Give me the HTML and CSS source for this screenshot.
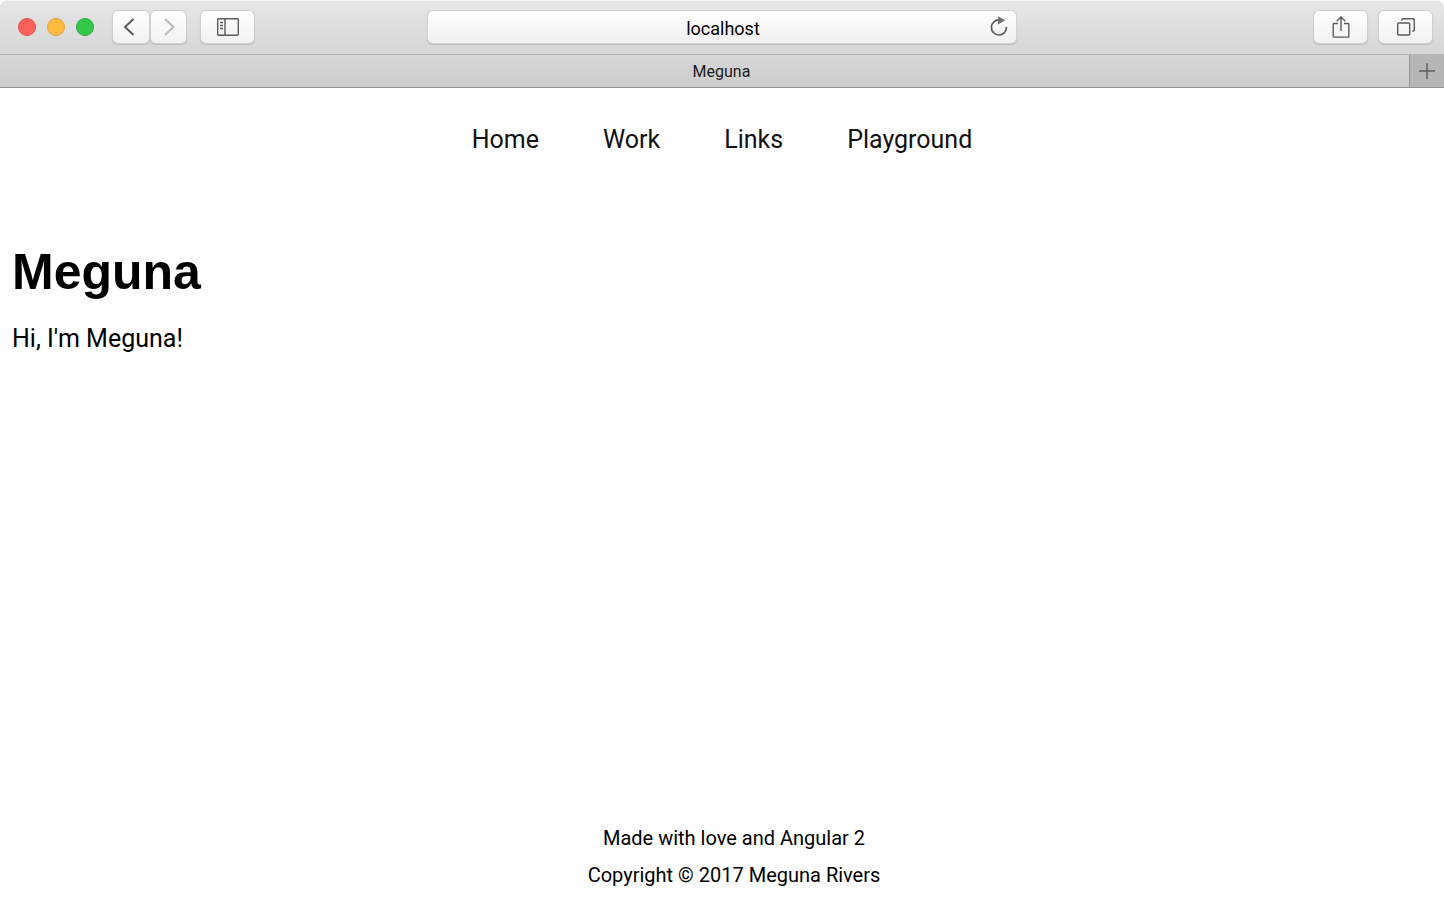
FILE: index.html
```html
<!DOCTYPE html>
<html lang="en">
<head>
<meta charset="utf-8">
<meta name="viewport" content="width=device-width, initial-scale=1">
<title>Meguna</title>
<link rel="stylesheet" href="styles.css">
</head>
<body>
<div class="window">
  <header class="chrome">
    <div class="toolbar">
      <div class="tools">
        <div class="lights">
          <button class="light close" aria-label="Close"></button>
          <button class="light minimize" aria-label="Minimize"></button>
          <button class="light expand" aria-label="Full screen"></button>
        </div>
        <div class="history">
          <button class="tool back" aria-label="Back"><svg width="14" height="20" viewBox="0 0 14 20"><path d="M11.5 2 3 10l8.500 8" stroke-width="2"/></svg></button>
          <button class="tool dim" aria-label="Forward"><svg width="14" height="20" viewBox="0 0 14 20"><path d="m3 2 8.500 8L3 18" stroke-width="2"/></svg></button>
        </div>
        <button class="tool wide" aria-label="Show sidebar"><svg width="24" height="20" viewBox="0 0 24 20"><rect x="1.700" y="1.700" width="20.600" height="16.600" rx="1"/><path d="M9 2v16M4 5.500h3M4 8.500h3M4 11.500h3"/></svg></button>
      </div>
      <div class="address">
        <input class="url" type="text" value="localhost" aria-label="Address">
        <button class="reload" aria-label="Reload"><svg width="20" height="22" viewBox="0 0 20 22"><path d="M10.500 4A7.500 7.500 0 1 0 17.400 11" stroke-width="1.700"/><path class="solid" d="m9 .2 7.200 4.100L9 8.400z"/></svg></button>
      </div>
      <div class="tools end">
        <button class="tool wide" aria-label="Share"><svg width="20" height="24" viewBox="0 0 20 24"><path d="M7 8.500H3c-.5 0-.8.3-.8.800v12c0 .5.3.8.8.8h14c.5 0 .8-.3.800-.8v-12c0-.5-.3-.8-.8-.8h-4M10 16V2M5.700 6.200 10 1.900l4.300 4.300"/></svg></button>
        <button class="tool wide" aria-label="Show all tabs"><svg width="20" height="20" viewBox="0 0 20 20"><rect x="1.700" y="6" width="12" height="12" rx="1"/><path d="M6 3.800V2.600c0-.6.3-.9.9-.9h10.500c.6 0 .9.3.9.9v10.500c0 .6-.3.9-.9.9h-1.200"/></svg></button>
      </div>
    </div>
    <div class="tabs">
      <button class="tab">Meguna</button>
      <button class="new-tab" aria-label="New tab"><svg width="18" height="18" viewBox="0 0 18 18"><path d="M9 1v16M1 9h16"/></svg></button>
    </div>
  </header>
  <nav class="nav">
    <a href="#home">Home</a>
    <a href="#work">Work</a>
    <a href="#links">Links</a>
    <a href="#playground">Playground</a>
  </nav>
  <main class="content">
    <h1>Meguna</h1>
    <p>Hi, I'm Meguna!</p>
  </main>
  <footer class="footer">
    <p>Made with love and Angular 2</p>
    <p>Copyright © 2017 Meguna Rivers</p>
  </footer>
</div>
</body>
</html>
```
FILE: styles.css
```css
* { box-sizing: border-box; }
body { margin: 0; background: #fff; color: #000; font-family: Roboto, "Liberation Sans", sans-serif; }
button, input { margin: 0; padding: 0; border: 0; font: inherit; color: inherit; }
.window { display: flex; flex-direction: column; min-height: 100vh; }
.chrome { border-radius: 8px 8px 0 0; overflow: hidden; border-bottom: 1px solid #929292; }
.toolbar {
  display: grid;
  grid-template-columns: 1fr minmax(0, 588px) 1fr;
  align-items: center;
  height: 54px;
  padding: 0 12px;
  column-gap: 12px;
  background: linear-gradient(#e7e7e7, #d6d6d6);
  box-shadow: inset 0 1px #f3f3f3;
}
.tools { display: flex; align-items: center; }
.end { justify-content: flex-end; gap: 12px; }
.lights { display: flex; gap: 11px; margin: 0 19px 0 6px; }
.light { width: 18px; height: 18px; border-radius: 50%; border: 1px solid; }
.close { background: #fc605b; border-color: #e2504c; }
.minimize { background: #fdbc40; border-color: #dfa139; }
.expand { background: #34c84a; border-color: #27aa35; }
.history { display: flex; gap: 2px; margin-right: 15px; }
.tool {
  display: flex;
  align-items: center;
  justify-content: center;
  width: 35px;
  height: 32px;
  border-radius: 5px;
  background: linear-gradient(#fff, #f2f2f2);
  box-shadow: 0 0 0 1px #d0d0d0, 0 1px 1px 1px #bcbcbc;
}
.back { width: 36px; padding-right: 4px; }
.wide { width: 53px; }
svg { display: block; fill: none; stroke: #5b5b5b; stroke-width: 1.4; }
.dim svg { stroke: #bababa; }
.solid { fill: #6e6e6e; stroke: none; }
.address {
  display: flex;
  height: 32px;
  padding: 0 7px 0 29px;
  border-radius: 5px;
  background: linear-gradient(#fff, #f1f1f1);
  box-shadow: 0 0 0 1px #d3d3d3, 0 1px 1px 1px #b7bbb9;
}
.url { flex: 1; min-width: 0; padding-top: 2px; background: none; text-align: center; font-size: 18px; outline: none; }
.reload { display: flex; align-items: center; background: none; }
.tabs { display: flex; height: 33px; border-top: 1px solid #b2b2b2; background: linear-gradient(#d6d6d6, #cdcdcd); }
.tab { flex: 1; padding-left: 34px; background: none; font-size: 16px; color: #1c1c1c; }
.new-tab { display: flex; align-items: center; justify-content: center; width: 35px; background: #b6b6b6; border-left: 1px solid #979797; }
.nav { display: flex; justify-content: center; gap: 64px; padding: 37px 12px 0; font-size: 25px; line-height: 30px; }
.nav a { color: #111; text-decoration: none; }
.content { flex: 1; padding: 87px 12px 24px; }
h1 { margin: 0 0 22px; font-family: "Liberation Sans", sans-serif; font-size: 50px; line-height: 60px; font-weight: 700; }
.content p { margin: 0; font-size: 25px; line-height: 30px; }
.footer { padding: 0 0 9px 24px; text-align: center; font-size: 20px; line-height: 37px; }
.footer p { margin: 0; }
```
